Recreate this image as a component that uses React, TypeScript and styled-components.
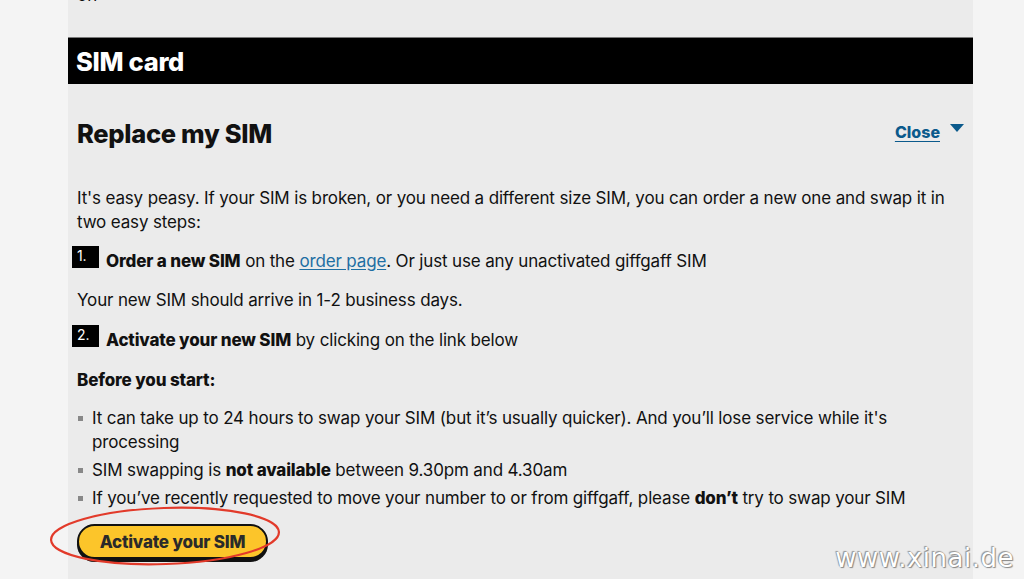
import React from "react";
import styled, { createGlobalStyle } from "styled-components";

const Global = createGlobalStyle`
  html, body { margin: 0; padding: 0; background: #f4f4f4; }
  body { font-family: "Inter", "Liberation Sans", sans-serif; color: #111; overflow: hidden; }
  * { box-sizing: border-box; }
  b { font-weight: 800; }
`;

const Page = styled.div`
  width: 1024px;
  height: 579px;
  overflow: hidden;
  position: relative;
  background: #f4f4f4;
`;

const Panel = styled.div`
  margin-left: 68px;
  width: 905px;
  height: 579px;
  background: #ebebeb;
  display: flex;
  flex-direction: column;
`;

const Cut = styled.p`
  margin: -17px 0 0;
  padding-left: 9px;
  font-size: 17px;
  line-height: 24px;
  height: 24px;
`;

const Header = styled.div`
  margin-top: 30px;
  border-top: 1px solid #7a7a7a;
  background: #000;
  height: 47px;
  display: flex;
  align-items: center;
  padding-left: 8px;
  color: #fff;
  font-size: 25.5px;
  font-weight: 800;
  letter-spacing: -0.3px;
`;

const Body = styled.div`
  padding: 0 9px;
  display: flex;
  flex-direction: column;
`;

const TitleRow = styled.div`
  display: flex;
  justify-content: space-between;
  align-items: flex-start;
  margin-top: 34px;
  height: 40px;
`;

const Title = styled.h2`
  margin: 0;
  font-size: 25.5px;
  line-height: 32px;
  font-weight: 800;
  letter-spacing: -0.3px;
`;

const CloseLink = styled.a`
  display: flex;
  align-items: flex-start;
  gap: 10px;
  margin-top: 4px;
  color: #0b5a8c;
  font-size: 16px;
  font-weight: 800;
  text-decoration: underline;
  text-underline-offset: 3px;
  line-height: 20px;
  cursor: pointer;
`;

const Tri = styled.span`
  display: inline-block;
  width: 0;
  height: 0;
  margin-top: 2px;
  border-left: 7px solid transparent;
  border-right: 7px solid transparent;
  border-top: 8px solid #0b5a8c;
`;

const Para = styled.p<{ $mt?: number }>`
  margin: ${(p) => p.$mt ?? 15}px 0 0;
  font-size: 17px;
  line-height: 24px;
  letter-spacing: -0.15px;
`;

const Step = styled.div<{ $mt?: number }>`
  display: flex;
  align-items: flex-start;
  margin-top: ${(p) => p.$mt ?? 15}px;
  margin-left: -5px;
  font-size: 17px;
  line-height: 24px;
  letter-spacing: -0.15px;
`;

const Num = styled.span`
  width: 27px;
  height: 22px;
  margin-top: -3px;
  margin-right: 7px;
  background: #000;
  color: #fff;
  font-size: 14px;
  line-height: 20px;
  padding-left: 5px;
  flex-shrink: 0;
`;

const Link = styled.a`
  color: #1f6fa3;
  text-decoration: underline;
  text-underline-offset: 2px;
`;

const List = styled.ul`
  margin: 14px 0 0;
  padding: 0;
  list-style: none;
  display: flex;
  flex-direction: column;
  gap: 4px;
`;

const Item = styled.li`
  position: relative;
  padding-left: 15px;
  padding-right: 40px;
  font-size: 17px;
  line-height: 24px;
  letter-spacing: -0.15px;
  &::before {
    content: "";
    position: absolute;
    left: 1px;
    top: 10px;
    width: 5px;
    height: 5px;
    background: #888;
  }
`;

const Button = styled.button`
  margin-top: 14px;
  align-self: flex-start;
  width: 191px;
  height: 35px;
  border-radius: 18px;
  border: 2px solid #111;
  background: #fcc52a;
  box-shadow: 0 3px 0 #111;
  font-family: inherit;
  font-size: 17px;
  font-weight: 800;
  letter-spacing: -0.2px;
  color: #2a2a2a;
  cursor: pointer;
`;

const Ring = styled.svg`
  position: absolute;
  left: 48px;
  top: 503px;
  pointer-events: none;
`;

const Watermark = styled.div`
  position: absolute;
  right: 10px;
  bottom: 6px;
  font-family: "DejaVu Sans", sans-serif;
  font-size: 26px;
  color: #fff;
  letter-spacing: 0.5px;
  text-shadow: 0 0 1px #777, 1px 1px 1px #888, -1px -1px 1px #999;
`;

export default function App() {
  return (
    <Page>
      <Global />
      <Panel>
        <Cut>on</Cut>
        <Header>SIM card</Header>
        <Body>
          <TitleRow>
            <Title>Replace my SIM</Title>
            <CloseLink>
              Close <Tri />
            </CloseLink>
          </TitleRow>
          <Para $mt={28}>
            It's easy peasy. If your SIM is broken, or you need a different size SIM, you can order a new one and swap it in two easy steps:
          </Para>
          <Step>
            <Num>1.</Num>
            <span>
              <b>Order a new SIM</b> on the <Link>order page</Link>. Or just use any unactivated giffgaff SIM
            </span>
          </Step>
          <Para>Your new SIM should arrive in 1-2 business days.</Para>
          <Step $mt={16}>
            <Num>2.</Num>
            <span>
              <b>Activate your new SIM</b> by clicking on the link below
            </span>
          </Step>
          <Para $mt={16}>
            <b>Before you start:</b>
          </Para>
          <List>
            <Item>
              It can take up to 24 hours to swap your SIM (but it’s usually quicker). And you’ll lose service while it's processing
            </Item>
            <Item>
              SIM swapping is <b>not available</b> between 9.30pm and 4.30am
            </Item>
            <Item>
              If you’ve recently requested to move your number to or from giffgaff, please <b>don’t</b> try to swap your SIM
            </Item>
          </List>
          <Button>Activate your SIM</Button>
        </Body>
      </Panel>
      <Ring width="236" height="64" viewBox="0 0 236 64">
        <ellipse cx="117" cy="33" rx="114" ry="28" fill="none" stroke="#e23a2a" strokeWidth="2.2" transform="rotate(-2 117 33)" />
      </Ring>
      <Watermark>www.xinai.de</Watermark>
    </Page>
  );
}
